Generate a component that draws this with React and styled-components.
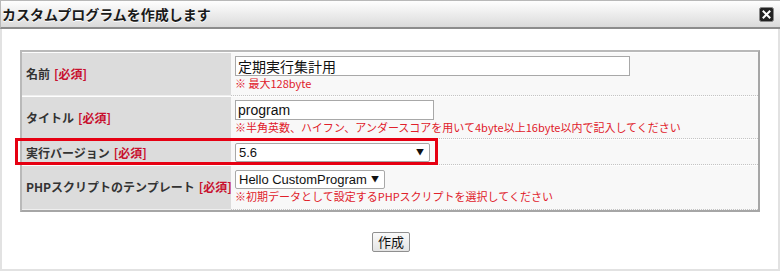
import styled, { createGlobalStyle } from "styled-components"

const GlobalStyle = createGlobalStyle`
  html, body {
    margin: 0;
    padding: 0;
    background: #fff;
  }
  body {
    font-family: "Noto Sans CJK JP", "Liberation Sans", sans-serif;
    color: #333;
  }
`

const Dialog = styled.div`
  width: 780px;
  height: 271px;
  box-sizing: border-box;
  display: flex;
  flex-direction: column;
`

const TitleBar = styled.div`
  height: 29px;
  box-sizing: border-box;
  display: flex;
  align-items: center;
  justify-content: space-between;
  padding: 0 6px 0 1px;
  background: linear-gradient(#fefefe, #e9e9e9 60%, #dadada);
  border-top: 1px solid #b8b8b8;
  border-left: 1px solid #b8b8b8;
  border-bottom: 2px solid #8c8c8c;
  .title-bar__title {
    margin: 0;
    font-size: 14px;
    font-weight: bold;
    color: #1a1a1a;
    text-shadow: 0 1px 0 #fff;
  }
`

const CloseButton = styled.button`
  width: 15px;
  height: 15px;
  padding: 0;
  border: none;
  background: none;
  display: flex;
  cursor: pointer;
`

const Body = styled.div`
  flex: 1;
  box-sizing: border-box;
  border-left: 2px solid #e2e2e2;
  border-right: 2px solid #e2e2e2;
  border-bottom: 2px solid #e2e2e2;
  padding: 21px 18px 0 18px;
  display: flex;
  flex-direction: column;
  align-items: stretch;
`

const FormTable = styled.table`
  width: 740px;
  table-layout: fixed;
  border-collapse: separate;
  border-spacing: 0;
  border: 2px solid;
  border-color: #b9b9b9 #a6a6a6 #a6a6a6 #b9b9b9;
  font-size: 12px;
`

const Row = styled.tr`
  th, td {
    padding: ${(p) => p.$pad || "3px 4px 5px"};
    vertical-align: top;
    border-top: 1px solid #fdfdfd;
  }
  th {
    box-sizing: border-box;
    width: 209px;
    text-align: left;
    vertical-align: middle;
    background: #dcdcdc;
    border-bottom: 1px solid #efefef;
    position: relative;
    padding-left: 4px;
    font-weight: bold;
    color: #333;
    white-space: nowrap;
  }
  td {
    background: #f8f8f8;
    border-bottom: 1px dotted #c4c4c4;
  }
`

const Required = styled.span`
  color: #c8102e;
  font-size: 12px;
  font-weight: bold;
  margin-left: 4px;
`

const TextInput = styled.input`
  display: block;
  box-sizing: border-box;
  width: ${(p) => p.$width}px;
  height: 20px;
  margin: 0;
  padding: 0 2px;
  border: 1px solid #a8a8a8;
  background: #fff;
  font-family: "Liberation Sans", "Noto Sans CJK JP", sans-serif;
  font-size: 14px;
  color: #111;
  outline: none;
`

const SelectBox = styled.div`
  position: relative;
  width: ${(p) => p.$width}px;
  select {
    display: block;
    box-sizing: border-box;
    width: 100%;
    height: 19px;
    margin: 0;
    padding: 0 14px 0 3px;
    appearance: none;
    border: 1px solid #a8a8a8;
    border-radius: 2px;
    background: #fff;
    font-family: "Liberation Sans", "Noto Sans CJK JP", sans-serif;
    font-size: 13px;
    color: #111;
    outline: none;
  }
  .select-box__arrow {
    position: absolute;
    right: 6px;
    top: 5px;
    font-size: 8px;
    line-height: 1;
    color: #111;
    pointer-events: none;
  }
`

const Hint = styled.p`
  margin: 1px 0 0;
  font-size: 11px;
  line-height: 13px;
  color: #e0202a;
  white-space: nowrap;
`

const Highlight = styled.div`
  position: absolute;
  z-index: 2;
  left: -7px;
  top: -2px;
  width: 417px;
  height: 21px;
  border: 3px solid #e60012;
  pointer-events: none;
`

const Actions = styled.div`
  display: flex;
  justify-content: center;
  padding-top: 20px;
  padding-left: 2px;
`

const SubmitButton = styled.button`
  height: 20px;
  padding: 0 5px;
  border: 1px solid #8f8f8f;
  border-radius: 2px;
  background: linear-gradient(#fafafa, #e4e4e4);
  font-family: "Noto Sans CJK JP", sans-serif;
  font-size: 13px;
  color: #111;
  line-height: 18px;
`

const CloseIcon = () => (
  <svg width="15" height="15" viewBox="0 0 15 15">
    <rect x="0.5" y="0.5" width="14" height="14" rx="2" fill="#222" stroke="#888" />
    <path d="M4.5 4.5 L10.5 10.5 M10.5 4.5 L4.5 10.5" stroke="#fff" strokeWidth="2" strokeLinecap="square" />
  </svg>
)

const Select = ({ width, value, options }) => (
  <SelectBox $width={width}>
    <select defaultValue={value}>
      {options.map((o) => (
        <option key={o}>{o}</option>
      ))}
    </select>
    <span className="select-box__arrow">▼</span>
  </SelectBox>
)

export default function App() {
  return (
    <>
      <GlobalStyle />
      <Dialog>
        <TitleBar>
          <h2 className="title-bar__title">カスタムプログラムを作成します</h2>
          <CloseButton aria-label="閉じる">
            <CloseIcon />
          </CloseButton>
        </TitleBar>
        <Body>
          <FormTable>
            <tbody>
              <Row $pad="3px 4px 5px">
                <th>
                  名前<Required>[必須]</Required>
                </th>
                <td>
                  <TextInput $width={395} defaultValue="定期実行集計用" />
                  <Hint>※ 最大128byte</Hint>
                </td>
              </Row>
              <Row $pad="3px 4px 4px">
                <th>
                  タイトル<Required>[必須]</Required>
                </th>
                <td>
                  <TextInput $width={199} defaultValue="program" />
                  <Hint>※半角英数、ハイフン、アンダースコアを用いて4byte以上16byte以内で記入してください</Hint>
                </td>
              </Row>
              <Row $pad="3px 4px 2px">
                <th>
                  実行バージョン<Required>[必須]</Required>
                  <Highlight />
                </th>
                <td>
                  <Select width={195} value="5.6" options={["5.6", "7.0"]} />
                </td>
              </Row>
              <Row $pad="4px 4px 6px">
                <th>
                  PHPスクリプトのテンプレート<Required>[必須]</Required>
                </th>
                <td>
                  <Select width={150} value="Hello CustomProgram" options={["Hello CustomProgram"]} />
                  <Hint>※初期データとして設定するPHPスクリプトを選択してください</Hint>
                </td>
              </Row>
            </tbody>
          </FormTable>
          <Actions>
            <SubmitButton>作成</SubmitButton>
          </Actions>
        </Body>
      </Dialog>
    </>
  )
}
